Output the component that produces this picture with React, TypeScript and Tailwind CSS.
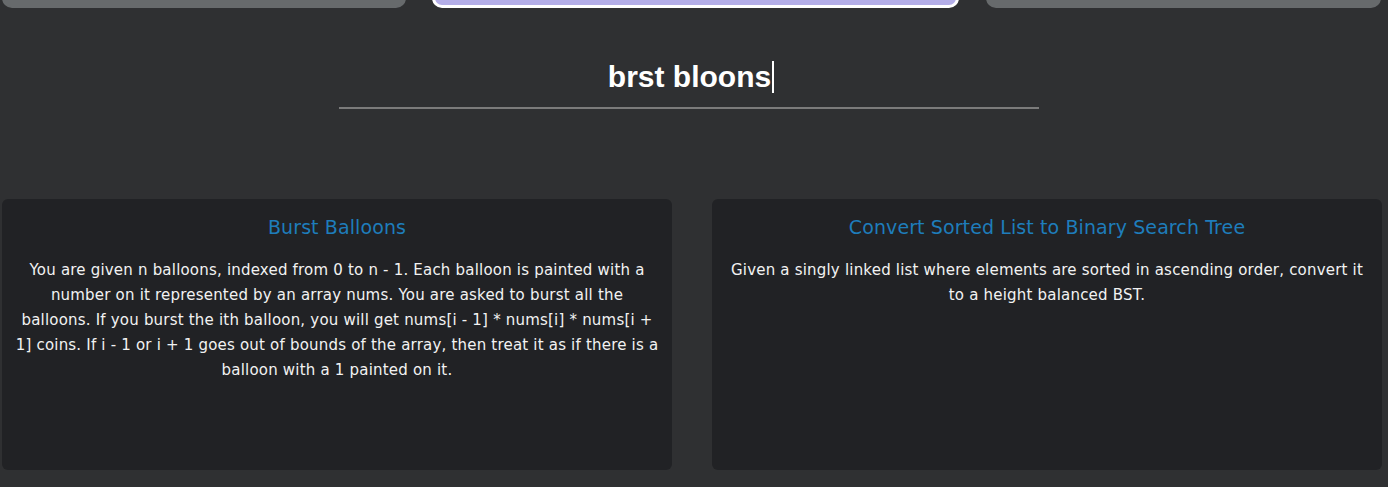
export default function App() {
  const cards = [
    {
      title: "Burst Balloons",
      lines: [
        "You are given n balloons, indexed from 0 to n - 1. Each balloon is painted with a",
        "number on it represented by an array nums. You are asked to burst all the",
        "balloons. If you burst the ith balloon, you will get nums[i - 1] * nums[i] * nums[i +",
        "1] coins. If i - 1 or i + 1 goes out of bounds of the array, then treat it as if there is a",
        "balloon with a 1 painted on it.",
      ],
    },
    {
      title: "Convert Sorted List to Binary Search Tree",
      lines: [
        "Given a singly linked list where elements are sorted in ascending order, convert it",
        "to a height balanced BST.",
      ],
    },
  ];
  return (
    <div className="w-[1388px] h-[487px] overflow-hidden bg-[#2f3032] flex flex-col">
      <div className="flex pl-[2px] pr-[7px] -mt-[40px] h-[48px]">
        <div className="w-[404px] h-full rounded-[10px] bg-[#676a6c]" />
        <div className="ml-[26px] w-[527px] h-full rounded-[10px] bg-[#b4aee8] border-[3px] border-white" />
        <div className="ml-[27px] flex-1 h-full rounded-[10px] bg-[#676a6c]" />
      </div>
      <div className="flex justify-center mt-[51px] pr-[10px]">
        <div className="w-[700px] border-b-2 border-[#7b7b7b] flex justify-center pb-[12px]">
          <div className="flex items-center pl-[4px]" style={{ fontFamily: "'Liberation Sans', Arial, sans-serif" }}>
            <span className="text-[30px] font-bold text-white leading-[36px]">brst bloons</span>
            <span className="w-[2px] h-[32px] bg-white ml-[1px]" />
          </div>
        </div>
      </div>
      <div className="flex gap-[40px] pl-[2px] mt-[90px]">
        {cards.map((c) => (
          <div
            key={c.title}
            className="w-[670px] h-[271px] rounded-[6px] bg-[#212225] px-[8px] pt-[14px] text-center"
            style={{ fontFamily: "'DejaVu Sans', sans-serif" }}
          >
            <div className="text-[19px] leading-[28px] text-[#1e7dbb] tracking-[0.1px]">{c.title}</div>
            <div className="mt-[17px] text-[15px] leading-[25px] text-[#f2f2f2] tracking-[0.2px] whitespace-nowrap">
              {c.lines.map((l, i) => (
                <div key={i}>{l}</div>
              ))}
            </div>
          </div>
        ))}
      </div>
    </div>
  );
}
